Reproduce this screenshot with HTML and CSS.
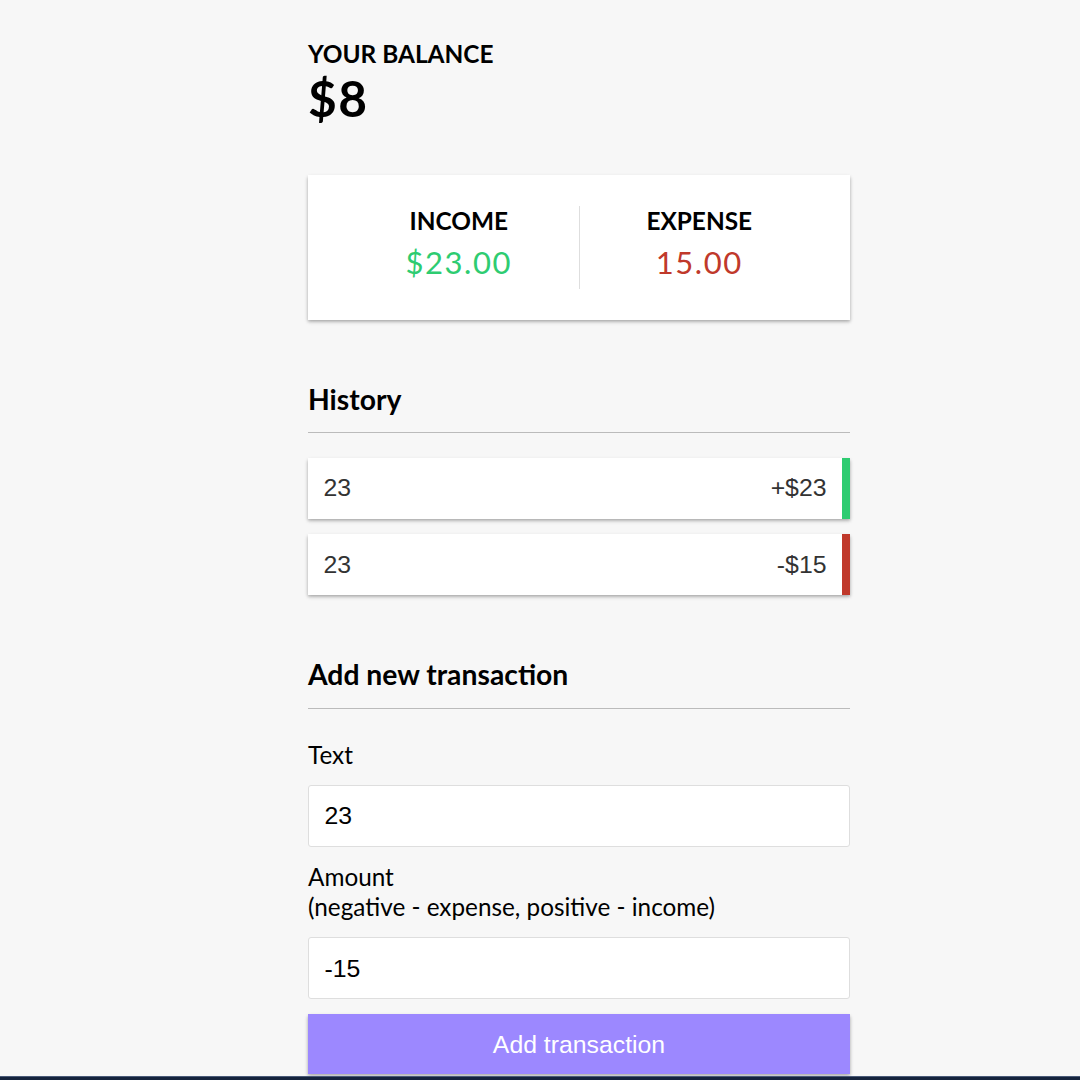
FILE: index.html
```html
<!DOCTYPE html>
<html lang="en">
<head>
<meta charset="UTF-8">
<title>Expense Tracker</title>
<link rel="stylesheet" href="styles.css">
</head>
<body>
<div class="container">
  <h4 class="balance-label">Your Balance</h4>
  <h1 class="balance">$8</h1>

  <div class="inc-exp">
    <div class="inc-exp-col col-income">
      <h4>Income</h4>
      <p class="money plus">$23.00</p>
    </div>
    <div class="inc-exp-col">
      <h4>Expense</h4>
      <p class="money minus">15.00</p>
    </div>
  </div>

  <h3 class="section-title">History</h3>
  <ul class="list">
    <li class="item plus"><span>23</span><span>+$23</span></li>
    <li class="item minus"><span>23</span><span>-$15</span></li>
  </ul>

  <h3 class="section-title">Add new transaction</h3>
  <form class="form">
    <div class="form-control">
      <label class="label" for="text">Text</label>
      <input class="field" type="text" id="text" value="23">
    </div>
    <div class="form-control">
      <label class="label" for="amount">Amount <br>(negative - expense, positive - income)</label>
      <input class="field" type="text" id="amount" value="-15">
    </div>
    <button class="btn" type="button">Add transaction</button>
  </form>
</div>
<div class="taskbar"></div>
</body>
</html>
```

FILE: styles.css
```css
* {
  box-sizing: border-box;
}

html, body {
  margin: 0;
  padding: 0;
}

body {
  background-color: #f7f7f7;
  font-family: "Lato", "Liberation Sans", sans-serif;
  color: #000;
  overflow: hidden;
  height: 1080px;
}

.container {
  width: 542px;
  margin-left: 308px;
  padding-top: 39px;
}

h4 {
  margin: 0;
  font-size: 24.4px;
  line-height: 29.76px;
  font-weight: 700;
  text-transform: uppercase;
}

.balance {
  margin: 0;
  font-size: 49.6px;
  line-height: 1.2;
  font-weight: 700;
  letter-spacing: 1.55px;
}

.inc-exp {
  background-color: #fff;
  box-shadow: 0 1.5px 4.5px rgba(0, 0, 0, 0.12), 0 1.5px 3px rgba(0, 0, 0, 0.24);
  padding: 31px;
  display: flex;
  justify-content: space-between;
  margin: 47px 0 31px;
}

.inc-exp-col {
  flex: 1;
  text-align: center;
}

.col-income {
  border-right: 1.5px solid #dedede;
}

.money {
  font-size: 31px;
  line-height: 1.2;
  letter-spacing: 1.55px;
  margin: 7.75px 0;
}

.money.plus {
  color: #2ecc71;
}

.money.minus {
  color: #c0392b;
}

.section-title {
  font-size: 28.3px;
  line-height: 34.8px;
  font-weight: 700;
  border-bottom: 1.5px solid #bbb;
  padding-bottom: 15.5px;
  margin: 62px 0 15.5px;
}

.list {
  list-style-type: none;
  padding: 0;
  margin: 24.8px 0 62px;
}

.item {
  background-color: #fff;
  box-shadow: 0 1.5px 4.5px rgba(0, 0, 0, 0.12), 0 1.5px 3px rgba(0, 0, 0, 0.24);
  color: #333;
  display: flex;
  justify-content: space-between;
  padding: 15.5px;
  margin: 15.5px 0;
  font-family: "Liberation Sans", Arial, sans-serif;
  font-size: 24.8px;
  line-height: 30px;
}

.item.plus {
  border-right: 8px solid #2ecc71;
}

.item.minus {
  border-right: 8px solid #c0392b;
}

.form-control {
  margin: 0;
}

.label {
  display: inline-block;
  margin: 15.5px 0;
  font-size: 24.3px;
  line-height: 29.76px;
}

.field {
  border: 1px solid #dedede;
  border-radius: 3px;
  display: block;
  font-family: "Liberation Sans", Arial, sans-serif;
  font-size: 24.8px;
  line-height: 29px;
  padding: 15.5px;
  width: 100%;
  color: #000;
  background: #fff;
  margin: 0;
}

.btn {
  background-color: #9c88ff;
  box-shadow: 0 1.5px 4.5px rgba(0, 0, 0, 0.12), 0 1.5px 3px rgba(0, 0, 0, 0.24);
  color: #fff;
  border: 0;
  display: block;
  font-family: "Liberation Sans", Arial, sans-serif;
  font-size: 24.8px;
  line-height: 29px;
  margin: 15px 0 46px;
  padding: 15.5px;
  width: 100%;
}

.taskbar {
  position: fixed;
  left: 0;
  right: 0;
  bottom: 0;
  height: 4px;
  background: linear-gradient(#4a5a78 0, #4a5a78 1px, #15233d 1px);
}
```
